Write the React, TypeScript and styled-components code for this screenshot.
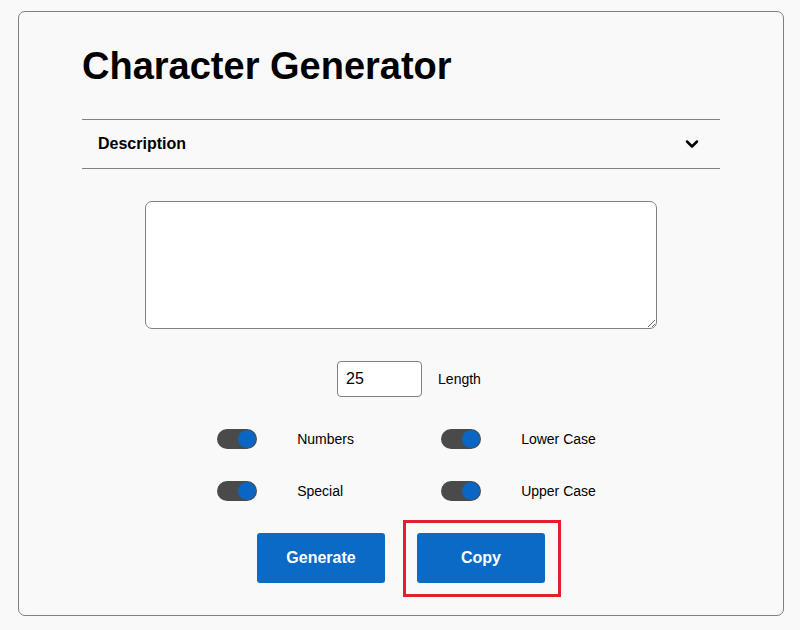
import { useState } from "react";
import styled, { createGlobalStyle } from "styled-components";
import { ChevronDown } from "lucide-react";

const GlobalStyle = createGlobalStyle`
  html, body {
    margin: 0;
    padding: 0;
    background: #f9f9f9;
    font-family: "Liberation Sans", Arial, sans-serif;
    color: #000;
  }
`;

const Card = styled.main`
  box-sizing: border-box;
  width: 766px;
  height: 605px;
  margin: 11px 0 0 18px;
  padding: 0 63px;
  border: 1px solid #808080;
  border-radius: 7px;
  background: #f9f9f9;
  display: flex;
  flex-direction: column;
`;

const Title = styled.h1`
  margin: 32px 0 31px;
  font-size: 38px;
  font-weight: 700;
  line-height: 44px;
`;

const Body = styled.div`
  display: flex;
  flex-direction: column;
  align-items: center;
  gap: 32px;
`;

const Accordion = styled.button`
  box-sizing: border-box;
  width: 100%;
  height: 50px;
  padding: 0 18px 0 16px;
  display: flex;
  align-items: center;
  justify-content: space-between;
  background: transparent;
  border: none;
  border-top: 1px solid #808080;
  border-bottom: 1px solid #808080;
  font-family: inherit;
  font-size: 16px;
  font-weight: 700;
  color: #000;
  cursor: pointer;
`;

const Output = styled.textarea`
  box-sizing: border-box;
  width: 512px;
  height: 128px;
  border: 1px solid #808080;
  border-radius: 7px;
  background: #fff;
  font-family: inherit;
  font-size: 16px;
  padding: 8px;
`;

const LengthRow = styled.label`
  display: flex;
  align-items: center;
  gap: 16px;
  padding-left: 16px;
  font-size: 14px;
`;

const NumberInput = styled.input`
  box-sizing: border-box;
  width: 85px;
  height: 36px;
  padding: 0 8px;
  border: 1px solid #808080;
  border-radius: 4px;
  background: #fff;
  font-family: inherit;
  font-size: 16px;
  color: #000;
`;

const Options = styled.div`
  display: grid;
  grid-template-columns: 224px auto;
  row-gap: 32px;
  padding-left: 11px;
`;

const Option = styled.label`
  display: flex;
  align-items: center;
  gap: 40px;
  font-size: 14px;
  cursor: pointer;
`;

const Track = styled.span<{ $on: boolean }>`
  box-sizing: border-box;
  width: 40px;
  height: 20px;
  padding: 1px;
  border-radius: 10px;
  background: #4a4a4a;
  display: flex;
  justify-content: ${(p) => (p.$on ? "flex-end" : "flex-start")};
`;

const Knob = styled.span`
  width: 18px;
  height: 18px;
  border-radius: 50%;
  background: #0a66c2;
`;

const Actions = styled.div`
  display: flex;
  gap: 32px;
`;

const Button = styled.button<{ $focused?: boolean }>`
  position: relative;
  width: 128px;
  height: 50px;
  border: none;
  border-radius: 3px;
  background: #0a6ac6;
  color: #fff;
  font-family: inherit;
  font-size: 16px;
  font-weight: 700;
  cursor: pointer;

  &::after {
    content: "";
    display: ${(p) => (p.$focused ? "block" : "none")};
    position: absolute;
    inset: -13px -16px -14px -14px;
    border: 3px solid #e3202a;
    pointer-events: none;
  }
`;

const options = ["Numbers", "Lower Case", "Special", "Upper Case"];

export default function App() {
  const [flags, setFlags] = useState<Record<string, boolean>>({
    Numbers: true,
    "Lower Case": true,
    Special: true,
    "Upper Case": true,
  });

  return (
    <>
      <GlobalStyle />
      <Card>
        <Title>Character Generator</Title>
        <Body>
          <Accordion>
            Description
            <ChevronDown size={20} strokeWidth={3} />
          </Accordion>
          <Output />
          <LengthRow>
            <NumberInput type="text" defaultValue="25" />
            Length
          </LengthRow>
          <Options>
            {options.map((name) => (
              <Option
                key={name}
                onClick={() => setFlags((f) => ({ ...f, [name]: !f[name] }))}
              >
                <Track $on={flags[name]}>
                  <Knob />
                </Track>
                {name}
              </Option>
            ))}
          </Options>
          <Actions>
            <Button>Generate</Button>
            <Button $focused>Copy</Button>
          </Actions>
        </Body>
      </Card>
    </>
  );
}
